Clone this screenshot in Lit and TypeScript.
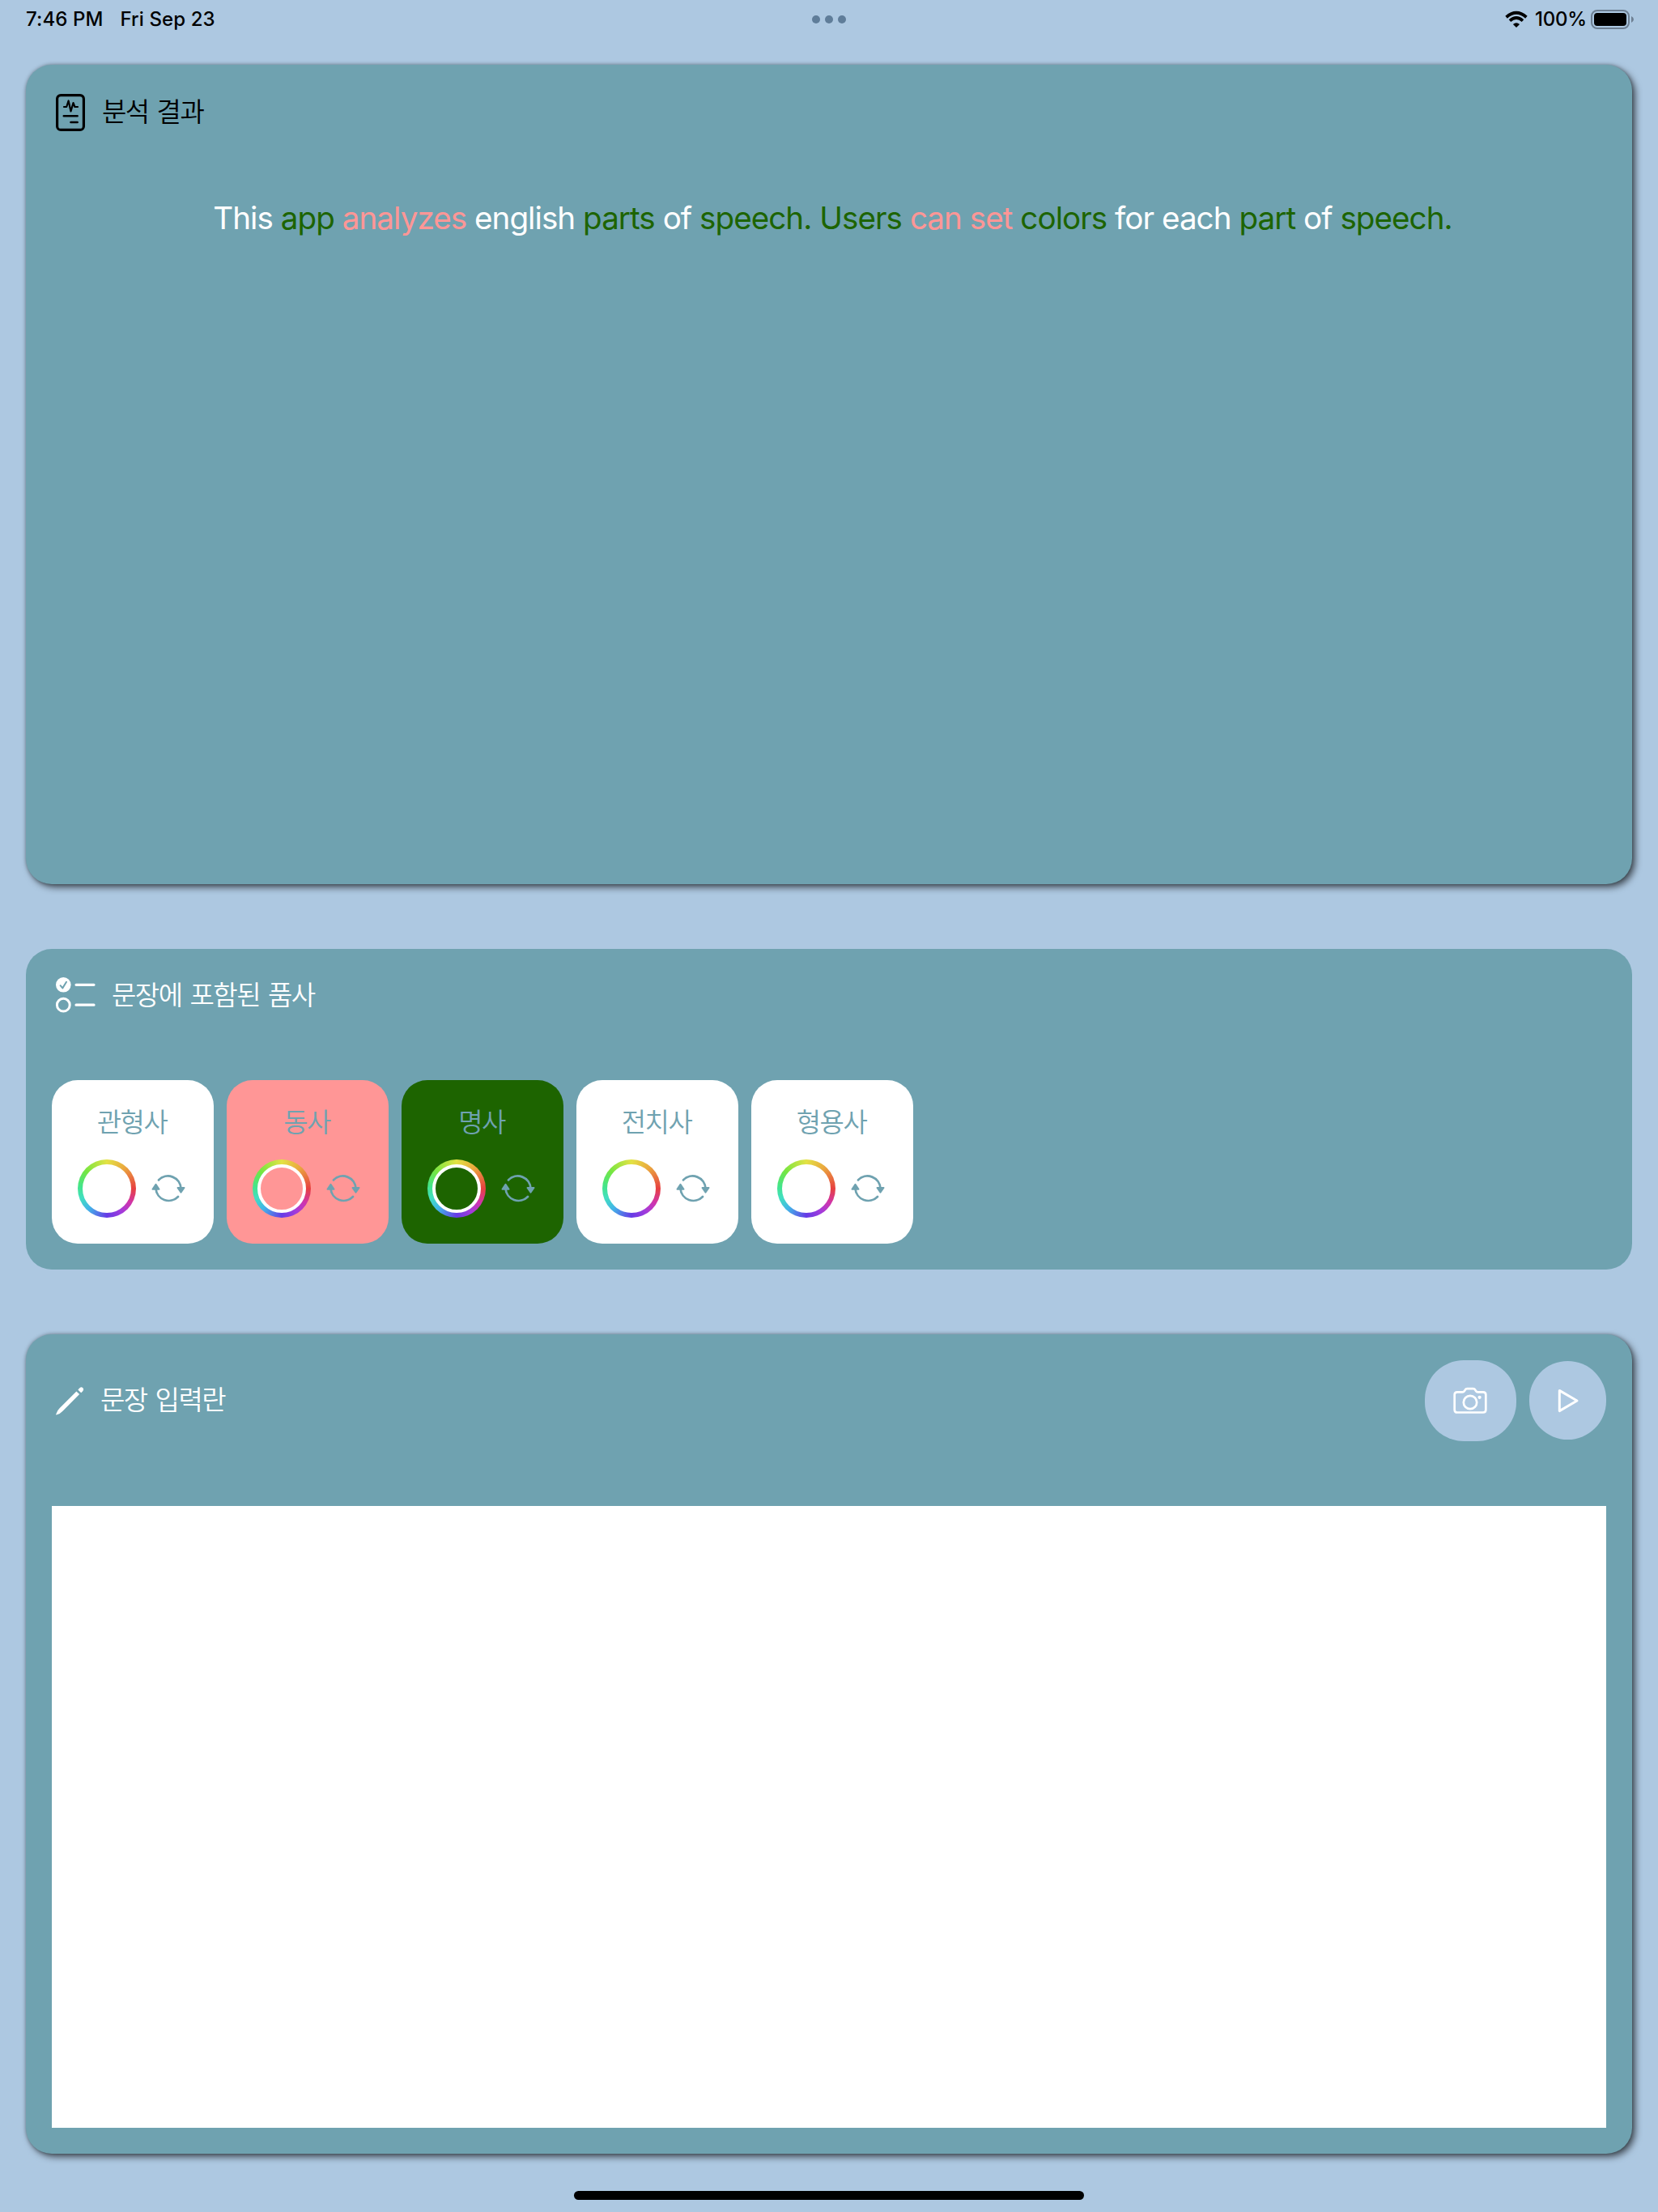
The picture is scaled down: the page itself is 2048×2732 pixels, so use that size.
import { LitElement, html, css, svg } from "lit";
import { customElement, property } from "lit/decorators.js";
import { styleMap } from "lit/directives/style-map.js";

const base = css`
  :host { display: block; box-sizing: border-box; }
  * { box-sizing: border-box; }
  svg { display: block; flex: none; overflow: visible; }
`;

@customElement("status-bar")
class StatusBar extends LitElement {
  static styles = [base, css`
    :host { height: 80px; padding: 0 32px; font: 500 24px/48px Inter, sans-serif; color: #000; }
    .bar { display: grid; grid-template-columns: 1fr auto 1fr; align-items: center; height: 48px; }
    .left { display: flex; gap: 21px; white-space: nowrap; }
    .time { letter-spacing: 0.1px; }
    .date { letter-spacing: 0.1px; }
    .dots { display: flex; gap: 6px; }
    .dot { width: 10px; height: 10px; border-radius: 50%; background: #5f7d99; }
    .right { display: flex; justify-content: flex-end; align-items: center; margin-right: -2px; }
    .pct { margin: 0 5px 0 9px; letter-spacing: -0.2px; }
  `];
  render() {
    return html`<div class="bar">
      <div class="left"><span class="time">7:46 PM</span><span class="date">Fri Sep 23</span></div>
      <div class="dots"><i class="dot"></i><i class="dot"></i><i class="dot"></i></div>
      <div class="right">
        <svg width="28" height="20" viewBox="0 0 28 20" fill="none" stroke="#000" stroke-width="3.8">
          <path d="M1.6 7.2Q14-3.6 26.4 7.2M6 11.6Q14 4.6 22 11.6"/>
          <path d="M14 20L9.9 16Q14 12.4 18.1 16Z" fill="#000" stroke="none"/>
        </svg>
        <span class="pct">100%</span>
        <svg width="53" height="24" viewBox="0 0 53 24">
          <rect x="1" y="1" width="46" height="22" rx="7" fill="none" stroke="#6d7f92" stroke-width="2"/>
          <rect x="4" y="4" width="40" height="16" rx="4"/>
          <path d="M50 8Q53 9.500 53 12Q53 14.500 50 16Z" fill="#6d7f92"/>
        </svg>
      </div>
    </div>`;
  }
}

@customElement("speech-tile")
class SpeechTile extends LitElement {
  @property() label = "";
  @property() color = "#fff";
  static styles = [base, css`
    .tile { width: 200px; height: 202px; border-radius: 32px; padding: 28px 32px 0; color: #6fa2b0; }
    .name { font: 350 33px/44px "Noto Sans CJK KR", sans-serif; text-align: center; letter-spacing: -1.5px; height: 44px; white-space: nowrap; padding-right: 2px; }
    .tools { display: flex; align-items: center; gap: 19px; margin-top: 26px; }
    .ring { width: 72px; height: 72px; padding: 6px; border-radius: 50%; flex: none;
      background: conic-gradient(#e3e244, #eaa83e 40deg, #e74040 90deg, #cf35ae 122deg, #a23bdc 148deg, #653be6 180deg, #42b4e8 222deg, #42dfc0 250deg, #43e58a 275deg, #76e641 310deg, #e3e244); }
    .hole { width: 60px; height: 60px; border: 4px solid #fff; border-radius: 50%; background-color: #fff; }
  `];
  render() {
    return html`<div class="tile" style=${styleMap({ background: this.color })}>
      <div class="name">${this.label}</div>
      <div class="tools">
        <div class="ring"><div class="hole" style=${styleMap({ background: this.color })}></div></div>
        <svg width="42" height="36" viewBox="0 0 42 36" fill="none" stroke="#6fa2b0" stroke-width="2.8" stroke-linecap="round">
          <path d="M9 7.400A16 16 0 0 1 36.500 18"/>
          <path d="M33 28A16 16 0 0 1 5.500 18"/>
          <path d="M32.500 17h8l-4 5.600zM1.500 18.700h8l-4-5.900z" fill="#6fa2b0" stroke-width="2" stroke-linejoin="round"/>
        </svg>
      </div>
    </div>`;
  }
}

const reportIcon = svg`<svg width="36" height="46" viewBox="0 0 36 46" fill="none" stroke="currentColor" stroke-linecap="round" stroke-linejoin="round">
  <rect x="1.600" y="1.600" width="32.800" height="42.800" rx="4.500" stroke-width="3.200"/>
  <path d="M10 16h3.200l2.400-7.500 2.900 13 3-10.500 1.900 5H27" stroke-width="2.200"/>
  <path d="M9.800 27.200h16.800M18.500 35h8.100" stroke-width="2.600"/></svg>`;
const listIcon = svg`<svg width="48" height="44" viewBox="0 0 48 44" fill="none" stroke="#fff" stroke-linecap="round" stroke-linejoin="round">
  <circle cx="9.300" cy="9.300" r="9.300" fill="#fff" stroke="none"/>
  <path d="M5.600 10.200l2.700 3.200L13 5.800" stroke="#6fa2b0" stroke-width="2"/>
  <circle cx="9.300" cy="34.200" r="7.900" stroke-width="3"/>
  <path d="M25 9.300h22M25 34.200h22" stroke-width="3.200"/></svg>`;
const pencilIcon = svg`<svg width="35" height="35" viewBox="0 0 35 35" fill="#fff">
  <path d="M25.400 5.400l3.700 3.700L8.500 29.700Q5.500 33.200.5 34.500Q-.2 34.500.3 33.500Q1.500 29 4.600 26.200Z"/>
  <path d="M27.300 3.500l2.200-2.200q2-1.800 3.800-.1t.1 3.800l-2.200 2.200z"/></svg>`;

@customElement("app-root")
class AppRoot extends LitElement {
  static styles = [base, css`
    :host { width: 100%; height: 2732px; background: #adc8e1; overflow: hidden; }
    .screen { display: flex; flex-direction: column; height: 100%; }
    .panels { display: flex; flex-direction: column; padding: 0 32px; }
    .panel { background: #6fa2b0; border-radius: 32px; padding: 0 32px; color: #fff; }
    .raised { box-shadow: 4px 4px 8px rgba(0,0,0,.6), 0 0 4px rgba(0,0,0,.3); }
    .result { height: 1012px; }
    .parts { height: 396px; margin-top: 80px; }
    .entry { height: 1012px; margin-top: 80px; padding-top: 32px; }
    .head { display: flex; align-items: center; padding-left: 5px;
      font: 350 33px/44px "Noto Sans CJK KR", sans-serif; letter-spacing: -1.5px; word-spacing: 4px; white-space: nowrap; }
    .title { padding-bottom: 4px; line-height: 40px; }
    .result .head { padding-top: 36px; gap: 21px; color: #000; }
    .parts .head { padding-top: 35px; gap: 21px; }
    .entry .head { height: 100px; gap: 20px; }
    .result .title, .entry .title { padding-bottom: 6px; }
    .sentence { font: 400 38.6px/52px Inter, sans-serif; margin-top: 81px; text-align: center; white-space: nowrap; letter-spacing: -0.95px; padding-left: 9px; }
    .noun { color: #1d6400; }
    .verb { color: #ff9696; }
    .tiles { display: flex; gap: 16px; margin-top: 83px; }
    .actions { display: flex; align-items: center; gap: 16px; margin-left: auto; }
    .btn { display: flex; align-items: center; justify-content: center; background: #adc8e1; border-radius: 48px; border: 0; padding: 0; }
    .camera { width: 113px; height: 100px; padding-right: 1px; }
    .play { width: 95px; height: 97px; margin-bottom: 1px; }
    .input { height: 768px; margin-top: 80px; background: #fff; }
    .home { width: 630px; height: 11px; border-radius: 6px; background: #000; margin: 46px auto 0; }
  `];
  private words: [string, string][] = [
    ["This", ""], ["app", "noun"], ["analyzes", "verb"], ["english", ""], ["parts", "noun"], ["of", ""],
    ["speech.", "noun"], ["Users", "noun"], ["can", "verb"], ["set", "verb"], ["colors", "noun"], ["for", ""],
    ["each", ""], ["part", "noun"], ["of", ""], ["speech.", "noun"],
  ];
  private parts = [
    { label: "관형사", color: "#ffffff" }, { label: "동사", color: "#ff9696" }, { label: "명사", color: "#1d6400" },
    { label: "전치사", color: "#ffffff" }, { label: "형용사", color: "#ffffff" },
  ];
  render() {
    return html`<div class="screen">
      <status-bar></status-bar>
      <main class="panels">
        <section class="panel raised result">
          <div class="head">${reportIcon}<span class="title">분석 결과</span></div>
          <div class="sentence">${this.words.map(([w, c]) => html`<span class=${c}>${w}</span> `)}</div>
        </section>
        <section class="panel parts">
          <div class="head">${listIcon}<span class="title">문장에 포함된 품사</span></div>
          <div class="tiles">${this.parts.map(p => html`<speech-tile .label=${p.label} .color=${p.color}></speech-tile>`)}</div>
        </section>
        <section class="panel raised entry">
          <div class="head">${pencilIcon}<span class="title">문장 입력란</span>
            <div class="actions">
              <button class="btn camera"><svg width="42" height="32" viewBox="0 0 42 32" fill="none" stroke="#fff" stroke-width="2.700" stroke-linejoin="round">
                <path d="M5 5.300h6.500q1.500 0 2.400-1.400l.8-1.200Q15.600 1.200 17.200 1.200h7.600q1.600 0 2.500 1.500l.8 1.200q.9 1.400 2.400 1.400H37q3.300 0 3.300 3.300v18.600q0 3.300-3.300 3.300H5q-3.300 0-3.300-3.300V8.600Q1.700 5.300 5 5.300z"/>
                <circle cx="21" cy="18" r="8.200"/><circle cx="32.600" cy="11.800" r="2.100" fill="#fff" stroke="none"/></svg></button>
              <button class="btn play"><svg width="26" height="28" viewBox="0 0 26 28" fill="none" stroke="#fff" stroke-width="3" stroke-linejoin="round">
                <path d="M2.300 1.400L24 14 2.300 26.600z"/></svg></button>
            </div>
          </div>
          <div class="input"></div>
        </section>
      </main>
      <div class="home"></div>
    </div>`;
  }
}
